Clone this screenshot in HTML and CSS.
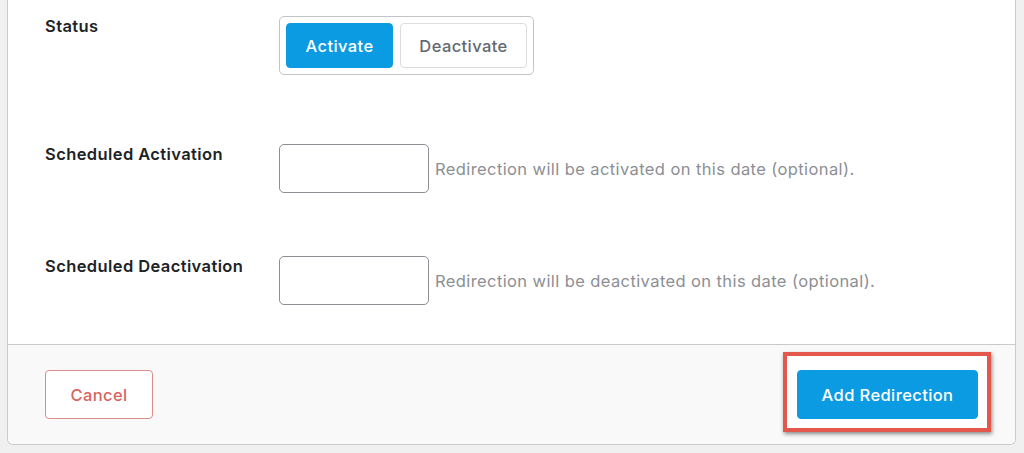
FILE: index.html
```html
<!DOCTYPE html>
<html lang="en">
<head>
<meta charset="utf-8">
<title>Add Redirection</title>
<link rel="stylesheet" href="styles.css">
</head>
<body>
<div class="card">
  <div class="card-body">
    <div class="row row-status">
      <div class="label">Status</div>
      <div class="control">
        <div class="segmented">
          <button class="seg seg-active" type="button">Activate</button>
          <button class="seg" type="button">Deactivate</button>
        </div>
      </div>
    </div>
    <div class="row row-activation">
      <div class="label">Scheduled Activation</div>
      <div class="control">
        <input class="date-input" type="text">
        <span class="help">Redirection will be activated on this date (optional).</span>
      </div>
    </div>
    <div class="row row-deactivation">
      <div class="label">Scheduled Deactivation</div>
      <div class="control">
        <input class="date-input" type="text">
        <span class="help">Redirection will be deactivated on this date (optional).</span>
      </div>
    </div>
  </div>
  <div class="card-footer">
    <button class="btn btn-cancel" type="button">Cancel</button>
    <div class="callout">
      <button class="btn btn-primary" type="button">Add Redirection</button>
    </div>
  </div>
</div>
</body>
</html>
```

FILE: styles.css
```css
* {
  box-sizing: border-box;
}

html, body {
  margin: 0;
  padding: 0;
}

body {
  background: #f0f0f1;
  font-family: Inter, "Liberation Sans", Arial, sans-serif;
  letter-spacing: 0.4px;
  color: #1d2327;
  width: 1024px;
  height: 453px;
  overflow: hidden;
}

.card {
  margin-left: 7px;
  width: 1009px;
  border: 1px solid #c9cacd;
  border-top: none;
  border-radius: 0 0 6px 6px;
  background: #fff;
  overflow: hidden;
}

.card-body {
  padding: 0 37px;
  height: 344px;
}

.row {
  display: grid;
  grid-template-columns: 234px 1fr;
  align-items: start;
}

.row-status {
  padding-top: 16px;
}

.row-activation {
  padding-top: 69px;
}

.row-deactivation {
  padding-top: 63px;
}

.label {
  font-size: 16.5px;
  font-weight: 600;
  line-height: 20px;
  color: #1d2327;
}

.control {
  display: flex;
  align-items: center;
}

.segmented {
  display: flex;
  gap: 7px;
  padding: 6px;
  border: 1px solid #c3c4c7;
  border-radius: 5px;
  background: #fff;
}

.seg {
  height: 45px;
  padding: 0;
  border: 1px solid #dcdcde;
  border-radius: 4px;
  background: #fff;
  color: #646970;
  font-family: inherit;
  font-size: 16.5px;
  font-weight: 500;
  letter-spacing: inherit;
  width: 127px;
}

.seg-active {
  width: 107px;
  background: #0b9be2;
  border-color: #0b9be2;
  color: #fff;
}

.date-input {
  width: 150px;
  height: 49px;
  margin: 0;
  border: 1px solid #8c8f94;
  border-radius: 5px;
  background: #fff;
}

.help {
  margin-left: 6px;
  font-size: 16.5px;
  color: #8c8f94;
}

.card-footer {
  display: flex;
  justify-content: space-between;
  align-items: center;
  height: 100px;
  padding: 0 37px;
  border-top: 1px solid #c9cacd;
  background: #f9f9f9;
}

.btn {
  height: 49px;
  border-radius: 4px;
  font-family: inherit;
  font-size: 16.5px;
  font-weight: 500;
  letter-spacing: inherit;
  padding: 0;
}

.btn-cancel {
  width: 108px;
  background: #fff;
  border: 1px solid #dc8d8a;
  color: #d5665f;
}

.callout {
  display: flex;
  margin: -18px -13px -13px -14px;
  padding: 14px 9px 9px 10px;
  border: 4px solid #e4574d;
  background: #fff;
  box-shadow: 1px 2px 4px rgba(0, 0, 0, 0.45);
}

.btn-primary {
  width: 181px;
  background: #0b9be2;
  border: 1px solid #0b9be2;
  color: #fff;
}
```
